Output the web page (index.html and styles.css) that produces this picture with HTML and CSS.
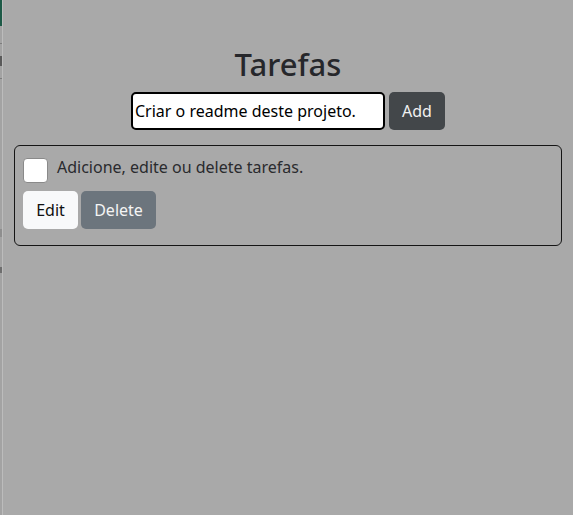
FILE: index.html
```html
<!DOCTYPE html>
<html lang="pt">
<head>
<meta charset="utf-8">
<title>Tarefas</title>
<link rel="stylesheet" href="styles.css">
</head>
<body>
<div class="page">
  <div class="edge">
    <span class="edge-green"></span>
    <span class="tick t1"></span>
    <span class="tick t2"></span>
    <span class="tick t3"></span>
    <span class="tick t4"></span>
    <span class="tick t5"></span>
  </div>
  <main class="main">
    <h1 class="title">Tarefas</h1>
    <form class="add-form">
      <input class="task-input" type="text" value="Criar o readme deste projeto.">
      <button class="btn btn-dark" type="button">Add</button>
    </form>
    <div class="task-card">
      <div class="task-row">
        <span class="checkbox"></span>
        <span class="task-text">Adicione, edite ou delete tarefas.</span>
      </div>
      <div class="task-actions">
        <button class="btn btn-light" type="button">Edit</button>
        <button class="btn btn-secondary" type="button">Delete</button>
      </div>
    </div>
  </main>
</div>
</body>
</html>
```

FILE: styles.css
```css
html, body {
  margin: 0;
  height: 100%;
}
body {
  background: #a9a9a9;
  font-family: "Noto Sans", "DejaVu Sans", sans-serif;
  font-size: 16px;
  color: #2a2b2e;
}
.page {
  display: flex;
  min-height: 100%;
}
.edge {
  width: 2px;
  flex: none;
  background: #a3a3a3;
  border-right: 1px solid #bcbcbc;
  display: flex;
  flex-direction: column;
}
.edge-green {
  display: block;
  height: 26px;
  background: #1d5a47;
}
.tick {
  display: block;
  height: 1px;
  background: #7d7d7d;
  margin-top: 17px;
}
.tick.t2 { height: 10px; margin-top: 12px; background: #5a5a5a; }
.tick.t3 { margin-top: 12px; }
.tick.t4 { height: 8px; margin-top: 150px; background: #8e8e8e; }
.tick.t5 { height: 6px; margin-top: 30px; background: #6e6e6e; }
.main {
  flex: 1;
  padding: 46px 11px 0 11px;
}
.title {
  margin: 0 0 9px;
  text-align: center;
  font-size: 31px;
  font-weight: 500;
  line-height: 37px;
  color: #26272b;
}
.add-form {
  display: flex;
  justify-content: center;
  gap: 4px;
  margin: 0;
}
.task-input {
  box-sizing: border-box;
  width: 254px;
  height: 38px;
  border: 2px solid #000;
  border-radius: 5px;
  background: #fff;
  padding: 0 2px;
  font-family: inherit;
  font-size: 16px;
  color: #000;
  outline: none;
}
.btn {
  box-sizing: border-box;
  height: 38px;
  border: none;
  border-radius: 5px;
  padding: 0 12px;
  font-family: inherit;
  font-size: 16px;
  line-height: 38px;
}
.btn-dark {
  background: #43474a;
  color: #f1f1f1;
  width: 56px;
}
.btn-light {
  background: #f8f9fa;
  color: #111;
  width: 55px;
}
.btn-secondary {
  background: #6c757d;
  color: #f4f4f4;
  width: 75px;
}
.task-card {
  margin-top: 15px;
  border: 1px solid #151515;
  border-radius: 6px;
  padding: 12px 8px 16px;
}
.task-row {
  display: flex;
  align-items: flex-start;
  gap: 9px;
  height: 25px;
}
.checkbox {
  box-sizing: border-box;
  width: 25px;
  height: 25px;
  background: #fff;
  border: 1px solid #8a8a8a;
  border-radius: 4px;
  flex: none;
}
.task-text {
  line-height: 18px;
  color: #2a2b2e;
}
.task-actions {
  display: flex;
  gap: 3px;
  margin-top: 8px;
}
```
